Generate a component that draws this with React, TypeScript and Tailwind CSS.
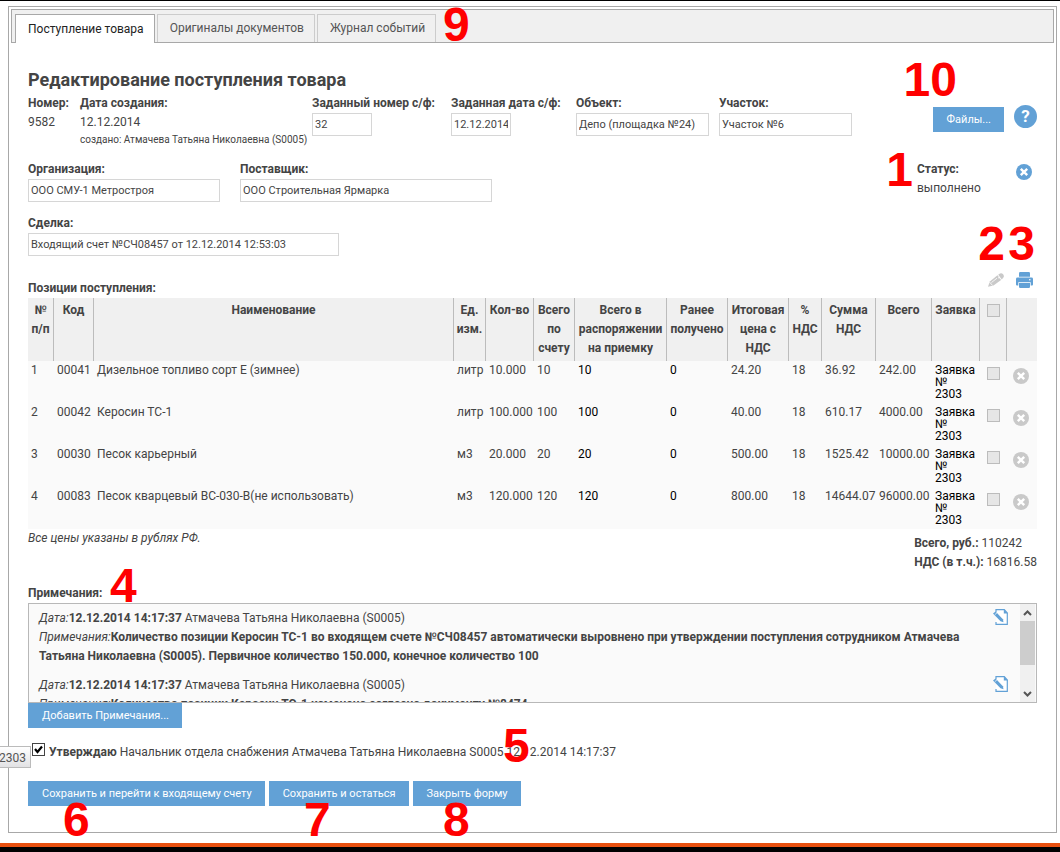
import { useState } from "react";
import clsx from "clsx";

type Row = {
  n: number;
  code: string;
  name: string;
  unit: string;
  qty: string;
  total: string;
  price: string;
  vat: string;
  sum: string;
};

const rows: Row[] = [
  { n: 1, code: "00041", name: "Дизельное топливо сорт Е (зимнее)", unit: "литр", qty: "10.000", total: "10", price: "24.20", vat: "36.92", sum: "242.00" },
  { n: 2, code: "00042", name: "Керосин ТС-1", unit: "литр", qty: "100.000", total: "100", price: "40.00", vat: "610.17", sum: "4000.00" },
  { n: 3, code: "00030", name: "Песок карьерный", unit: "м3", qty: "20.000", total: "20", price: "500.00", vat: "1525.42", sum: "10000.00" },
  { n: 4, code: "00083", name: "Песок кварцевый ВС-030-В(не использовать)", unit: "м3", qty: "120.000", total: "120", price: "800.00", vat: "14644.07", sum: "96000.00" },
];

const columns = [
  { title: "№ п/п", width: "w-[26px]" },
  { title: "Код", width: "w-[40px]" },
  { title: "Наименование", width: "" },
  { title: "Ед. изм.", width: "w-[32px]" },
  { title: "Кол-во", width: "w-[48px]" },
  { title: "Всего по счету", width: "w-[41px]" },
  { title: "Всего в распоряжении на приемку", width: "w-[92px]" },
  { title: "Ранее получено", width: "w-[61px]" },
  { title: "Итоговая цена с НДС", width: "w-[61px]" },
  { title: "% НДС", width: "w-[33px]" },
  { title: "Сумма НДС", width: "w-[54px]" },
  { title: "Всего", width: "w-[56px]" },
  { title: "Заявка", width: "w-[48px]" },
];

const notes = [
  "Количество позиции Керосин ТС-1 во входящем счете №СЧ08457 автоматически выровнено при утверждении поступления сотрудником Атмачева Татьяна Николаевна (S0005). Первичное количество 150.000, конечное количество 100",
  "Количество позиции Керосин ТС-1 изменено согласно документу №8474",
];

const callouts = [
  { text: "9", place: "left-[443px] top-0" },
  { text: "10", place: "right-[103px] top-[55px]" },
  { text: "1", place: "right-[147px] top-[145px]" },
  { text: "2", place: "right-[55px] top-[219px]" },
  { text: "3", place: "right-[25px] top-[219px]" },
  { text: "4", place: "left-[110px] top-[561px]" },
  { text: "5", place: "left-[503px] top-[721px]" },
  { text: "6", place: "left-[63px] top-[795px]" },
  { text: "7", place: "left-[304px] top-[795px]" },
  { text: "8", place: "left-[443px] top-[795px]" },
];

function Cross({ className }: { className: string }) {
  return (
    <svg viewBox="0 0 16 16" className={clsx("block size-4", className)} aria-hidden="true">
      <circle cx="8" cy="8" r="8" fill="currentColor" />
      <path d="M4.800 4.800l6.400 6.400M11.200 4.800l-6.400 6.400" stroke="#fff" strokeWidth="2.400" fill="none" />
    </svg>
  );
}

function Pencil() {
  return (
    <svg viewBox="0 0 16 14" className="block h-[14px] w-4 text-[#c9c9c9]" aria-hidden="true">
      <path d="M0 13.800l1.800-5.200L9.500 2.300l3.600 4.700-7.600 5.400z" fill="currentColor" />
      <path d="M10.200 1.800L12 .6q1.600-.9 3.100.7 1.400 1.800.3 3.100l-1.600 2z" fill="currentColor" />
      <path d="M3.500 9.500l5.500-4.300M1.600 9.200l3 3.300" stroke="#fff" strokeWidth=".8" fill="none" />
      <circle cx="11" cy="4.800" r=".8" fill="#fff" />
    </svg>
  );
}

function Printer() {
  return (
    <svg viewBox="0 0 17 16" className="block h-4 w-[17px]" aria-hidden="true">
      <path d="M3 4.800V1.200Q3 0 4.200 0h8.600Q14 0 14 1.200v3.600z" fill="#62a1d6" />
      <path d="M1.500 5.600h14Q17 5.600 17 7v5.500q0 1-1 1H1q-1 0-1-1V7q0-1.400 1.500-1.400z" fill="#62a1d6" />
      <path d="M2.300 16v-5.800h12.400V16" fill="#fff" />
      <path d="M3 11h11v3.800q0 1.200-1.200 1.200H4.200Q3 16 3 14.800z" fill="#62a1d6" />
      <circle cx="13.800" cy="7.800" r=".8" fill="#fff" />
    </svg>
  );
}

function EditNote() {
  return (
    <svg viewBox="0 0 16 16" className="block size-4" aria-hidden="true">
      <path d="M3 3V.700h8.300L14.300 4v11.300H3V13" fill="#fff" stroke="#62a1d6" strokeWidth="1.200" />
      <path d="M10.800.2L15 4.600h-4.200z" fill="#62a1d6" />
      <path d="M0 4.400L2.600 2.500l7.300 7.700.6 3.100-3-1z" fill="#62a1d6" />
      <path d="M1.800 5.700l2.200-1.900" stroke="#fff" strokeWidth=".7" />
    </svg>
  );
}

function Field({ id, label, value, width }: { id: string; label: string; value: string; width: string }) {
  return (
    <div className="flex flex-col items-start">
      <label htmlFor={id} className="font-bold whitespace-nowrap">
        {label}
      </label>
      <input
        id={id}
        defaultValue={value}
        className={clsx("h-[23px] border border-[#d6d6d6] bg-white px-[2px] text-[11px] outline-none focus:border-[#62a1d6]", width)}
      />
    </div>
  );
}

function BlueButton({ children }: { children: string }) {
  return (
    <button type="button" className="h-[25px] cursor-pointer bg-[#62a1d6] pr-[13px] pl-[14px] text-[11px] whitespace-nowrap text-white hover:bg-[#4f90c8]">
      {children}
    </button>
  );
}

function GreyCheck({ label }: { label: string }) {
  return (
    <input
      type="checkbox"
      disabled
      aria-label={label}
      className="mx-auto block size-[13px] appearance-none border border-[#bcbcbc] bg-[#e6e6e6]"
    />
  );
}

export default function App() {
  const [tab, setTab] = useState(0);
  const [approved, setApproved] = useState(true);

  return (
    <div className="relative flex min-h-screen flex-col overflow-hidden border-t border-black bg-white font-[Roboto,Arial,sans-serif] text-[12px] leading-[19px] text-[#444]">
      <main className="mt-[5px] mr-[3px] ml-2 border border-[#a8a8a8] p-[2px]">
        <nav className="flex h-[34px] items-end gap-[2px] border border-[#a8a8a8] bg-[#f0f0f0] pl-[3px]">
          {["Поступление товара", "Оригиналы документов", "Журнал событий"].map((title, i) => (
            <button
              key={title}
              type="button"
              onClick={() => setTab(i)}
              className={clsx(
                "cursor-pointer border border-b-0 pr-[10px] pl-3 whitespace-nowrap",
                tab === i ? "-mb-px h-[29px] border-[#a8a8a8] bg-white text-[#222]" : "h-[28px] border-[#ccc] text-[#555]",
              )}
            >
              {title}
            </button>
          ))}
        </nav>

        <form className="px-[17px] pt-[25px] pb-6" onSubmit={(e) => e.preventDefault()}>
          <h1 className="text-[18px] leading-6 font-bold">Редактирование поступления товара</h1>

          <div className="mt-[2px] flex items-start">
            <div className="w-[52px]">
              <b>Номер:</b>
              <p>9582</p>
            </div>
            <div className="w-[232px]">
              <b>Дата создания:</b>
              <p>12.12.2014</p>
              <p className="text-[10px] leading-4 whitespace-nowrap">создано: Атмачева Татьяна Николаевна (S0005)</p>
            </div>
            <div className="w-[139px]">
              <Field id="num" label="Заданный номер с/ф:" value="32" width="w-[60px]" />
            </div>
            <div className="w-[125px]">
              <Field id="date" label="Заданная дата с/ф:" value="12.12.2014" width="w-[60px]" />
            </div>
            <div className="w-[143px]">
              <Field id="object" label="Объект:" value="Депо (площадка №24)" width="w-[133px]" />
            </div>
            <Field id="area" label="Участок:" value="Участок №6" width="w-[133px]" />
            <div className="ml-auto flex items-end gap-[10px] pt-[11px]">
              <BlueButton>Файлы...</BlueButton>
              <button
                type="button"
                aria-label="Справка"
                className="mb-1 size-[23px] cursor-pointer rounded-full bg-[#62a1d6] text-center text-[17px] leading-[23px] font-bold text-white"
              >
                ?
              </button>
            </div>
          </div>

          <div className="mt-3 flex items-start gap-5">
            <Field id="org" label="Организация:" value="ООО СМУ-1 Метростроя" width="w-[192px]" />
            <Field id="supplier" label="Поставщик:" value="ООО Строительная Ярмарка" width="w-[252px]" />
            <div className="ml-auto flex">
              <div className="w-[99px]">
                <b>Статус:</b>
                <p>выполнено</p>
              </div>
              <button type="button" aria-label="Отменить статус" className="mt-1 mr-[5px] cursor-pointer self-start">
                <Cross className="text-[#62a1d6]" />
              </button>
            </div>
          </div>

          <div className="mt-3">
            <Field id="deal" label="Сделка:" value="Входящий счет №СЧ08457 от 12.12.2014 12:53:03" width="w-[311px]" />
          </div>

          <div className="mt-4 flex h-[26px] justify-between">
            <b className="self-end">Позиции поступления:</b>
            <div className="mr-1 flex items-start gap-3">
              <button type="button" aria-label="Редактировать" className="mt-px cursor-pointer">
                <Pencil />
              </button>
              <button type="button" aria-label="Печать" className="cursor-pointer">
                <Printer />
              </button>
            </div>
          </div>

          <table className="w-full table-fixed border-separate border-spacing-0 bg-[#fafafa]">
            <thead>
              <tr className="bg-[#f0f0f0] align-top">
                {columns.map((c) => (
                  <th key={c.title} scope="col" className={clsx("border-r border-[#bcbcbc] px-0 py-[3px] font-bold", c.width)}>
                    {c.title}
                  </th>
                ))}
                <th scope="col" className="w-[27px] border-r border-[#bcbcbc] py-[6px]">
                  <GreyCheck label="Выбрать все" />
                </th>
                <th scope="col" className="w-[30px]" aria-label="Удаление" />
              </tr>
            </thead>
            <tbody>
              {rows.map((r) => (
                <tr key={r.n} className="align-top leading-3 *:py-[3px] *:pl-[3px] *:whitespace-nowrap">
                  <td>{r.n}</td>
                  <td>{r.code}</td>
                  <td>{r.name}</td>
                  <td>{r.unit}</td>
                  <td>{r.qty}</td>
                  <td>{r.total}</td>
                  <td className="text-black">{r.total}</td>
                  <td className="text-black">0</td>
                  <td>{r.price}</td>
                  <td>18</td>
                  <td>{r.vat}</td>
                  <td>{r.sum}</td>
                  <td className="text-black">
                    Заявка
                    <br />№<br />
                    2303
                  </td>
                  <td>
                    <div className="pt-[3px] pr-1">
                      <GreyCheck label={`Выбрать позицию ${r.n}`} />
                    </div>
                  </td>
                  <td>
                    <button type="button" aria-label={`Удалить позицию ${r.n}`} className="mt-1 ml-[3px] block cursor-pointer">
                      <Cross className="text-[#c9c9c9]" />
                    </button>
                  </td>
                </tr>
              ))}
            </tbody>
          </table>

          <div className="flex items-start justify-between">
            <i>Все цены указаны в рублях РФ.</i>
            <div className="pt-[5px]">
              <p>
                <b>Всего, руб.:</b> 110242
              </p>
              <p>
                <b>НДС (в т.ч.):</b> 16816.58
              </p>
            </div>
          </div>

          <h2 className="mt-3 font-bold">Примечания:</h2>
          <div className="flex h-[100px] border border-[#b8b8b8] bg-[#fafafa]">
            <div className="flex flex-1 flex-col gap-[10px] overflow-y-auto py-[5px] pl-[10px] [scrollbar-width:none]">
              {notes.map((note) => (
                <article key={note} className="flex items-start">
                  <div className="flex-1">
                    <p>
                      <i>Дата:</i>
                      <b>12.12.2014 14:17:37</b> Атмачева Татьяна Николаевна (S0005)
                    </p>
                    <p>
                      <i>Примечания:</i>
                      <b>{note}</b>
                    </p>
                  </div>
                  <button type="button" aria-label="Изменить примечание" className="mr-[11px] cursor-pointer">
                    <EditNote />
                  </button>
                </article>
              ))}
            </div>
            <div className="mr-px flex w-[15px] flex-col bg-[#f0f0f0]" aria-hidden="true">
              <svg viewBox="0 0 15 17" className="h-[17px] w-[15px]">
                <path d="M4 11l3.500-3.500L11 11" fill="none" stroke="#555" strokeWidth="2" />
              </svg>
              <div className="h-[44px] bg-[#cdcdcd]" />
              <svg viewBox="0 0 15 17" className="mt-auto h-[17px] w-[15px]">
                <path d="M4 7l3.500 3.500L11 7" fill="none" stroke="#555" strokeWidth="2" />
              </svg>
            </div>
          </div>
          <div className="flex">
            <BlueButton>Добавить Примечания...</BlueButton>
          </div>

          <div className="relative z-10 mt-[15px] ml-1 flex items-start gap-1">
            <span className="grid size-[13px]">
              <input
                id="approve"
                type="checkbox"
                checked={approved}
                onChange={(e) => setApproved(e.target.checked)}
                className="peer col-start-1 row-start-1 size-[13px] appearance-none border border-[#444] bg-white"
              />
              <svg viewBox="0 0 13 13" className="pointer-events-none invisible col-start-1 row-start-1 size-[13px] peer-checked:visible" aria-hidden="true">
                <path d="M3 6l2.500 3L10 3.500" fill="none" stroke="#000" strokeWidth="2.200" />
              </svg>
            </span>
            <label htmlFor="approve">
              <b>Утверждаю</b> Начальник отдела снабжения Атмачева Татьяна Николаевна S0005 12.12.2014 14:17:37
            </label>
          </div>

          <div className="mt-[19px] flex gap-1">
            <BlueButton>Сохранить и перейти к входящему счету</BlueButton>
            <BlueButton>Сохранить и остаться</BlueButton>
            <BlueButton>Закрыть форму</BlueButton>
          </div>
        </form>
      </main>

      <footer className="mt-[10px] min-h-[9px] flex-1 border-t-4 border-[#e8500f] bg-black" />

      <div className="absolute top-[745px] left-0 flex h-[22px] w-[31px] justify-end overflow-hidden border border-l-0 border-[#bbb] bg-linear-to-b from-white to-[#e2e2e4] pr-1 leading-[22px] text-[#555]">
        =2303
      </div>

      {callouts.map((c) => (
        <span
          key={c.text}
          className={clsx("pointer-events-none absolute z-20 font-['Liberation_Sans',Arial,sans-serif] text-[48px] leading-[48px] font-bold text-[#f00]", c.place)}
        >
          {c.text}
        </span>
      ))}
    </div>
  );
}
